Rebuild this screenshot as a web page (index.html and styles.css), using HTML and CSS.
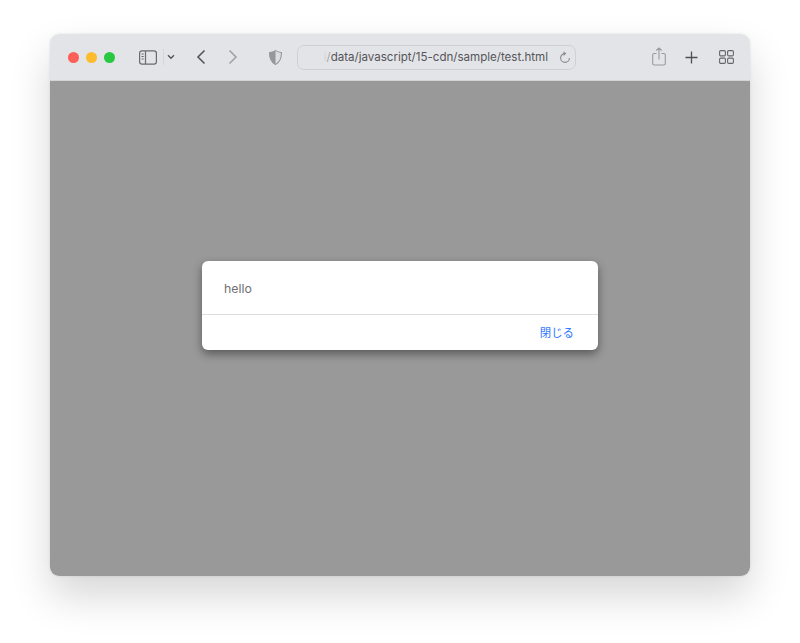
FILE: index.html
```html
<!DOCTYPE html>
<html lang="ja">
<head>
<meta charset="utf-8">
<title>test</title>
<link rel="stylesheet" href="styles.css">
</head>
<body>
<div class="window">
  <header class="toolbar">
    <div class="lights">
      <span class="light red"></span><span class="light yellow"></span><span class="light green"></span>
    </div>
    <svg class="ic sidebar" width="18" height="15" viewBox="0 0 18 15" fill="none" stroke="#6b6b6e" stroke-width="1.2"><rect x=".6" y=".8" width="16.8" height="13.4" rx="2.4"/><path d="M6.5 1v13M2.5 4h2.2M2.5 6.5h2.2M2.5 9h2.2" /></svg>
    <span class="sep"></span>
    <svg class="ic chev" width="8" height="6" viewBox="0 0 8 6" fill="none" stroke="#555" stroke-width="1.4"><path d="M1 1.3l3 3 3-3"/></svg>
    <svg class="ic back" width="10" height="16" viewBox="0 0 10 16" fill="none" stroke="#55555a" stroke-width="1.6"><path d="M8.5 1.5L2 8l6.5 6.5"/></svg>
    <svg class="ic forward" width="10" height="16" viewBox="0 0 10 16" fill="none" stroke="#a2a2a6" stroke-width="1.6"><path d="M1.5 1.5L8 8l-6.5 6.5"/></svg>
    <svg class="ic shield" width="13" height="15" viewBox="0 0 13 15"><path d="M6.5.6C8.300 1.700 10.200 2.300 12.400 2.500 12.600 8.300 10.700 12.400 6.500 14.400 2.300 12.400.4 8.300.6 2.500 2.800 2.300 4.700 1.700 6.500.6z" fill="#dcdde0" stroke="#96979b" stroke-width="1.100"/><path d="M6.500.6C4.700 1.700 2.800 2.300.6 2.500.4 8.300 2.300 12.400 6.500 14.400z" fill="#96979b"/></svg>
    <div class="urlbar">
      <span class="url"><span class="fade-i">i</span><span class="fade-slash">/</span>data/javascript/15-cdn/sample/test.html</span>
      <svg class="ic reload" width="12" height="13" viewBox="0 0 12 13" fill="none" stroke="#8a8a8e" stroke-width="1.100"><path d="M10.400 7A4.400 4.400 0 1 1 6 2.600"/><path d="M4.500.8l2 1.800-2 1.800"/></svg>
    </div>
    <svg class="ic share" width="14" height="19" viewBox="0 0 14 19" fill="none" stroke="#9a9a9e" stroke-width="1.100"><path d="M4.500 6.500H2.200A1.500 1.500 0 0 0 .7 8v8.500A1.500 1.500 0 0 0 2.200 18h9.600a1.500 1.500 0 0 0 1.500-1.500V8a1.500 1.500 0 0 0-1.500-1.500H9.500M7 12.500V1M4.300 3.500L7 .9l2.700 2.600"/></svg>
    <svg class="ic plus" width="13" height="13" viewBox="0 0 13 13" fill="none" stroke="#4e4e52" stroke-width="1.300"><path d="M6.500.5v12M.5 6.500h12"/></svg>
    <svg class="ic grid" width="15" height="14" viewBox="0 0 15 14" fill="none" stroke="#66666a" stroke-width="1.100"><rect x=".6" y=".6" width="5.800" height="5.300" rx="1.200"/><rect x="8.600" y=".6" width="5.800" height="5.300" rx="1.200"/><rect x=".6" y="8.100" width="5.800" height="5.300" rx="1.200"/><rect x="8.600" y="8.100" width="5.800" height="5.300" rx="1.200"/></svg>
  </header>
  <main class="content">
    <div class="dialog">
      <div class="dialog-body">hello</div>
      <div class="dialog-footer"><span class="close">閉じる</span></div>
    </div>
  </main>
</div>
</body>
</html>
```

FILE: styles.css
```css
html, body {
  margin: 0;
  height: 100%;
  background: #fff;
  overflow: hidden;
}
body {
  padding: 34px 50px 67px;
  box-sizing: border-box;
  font-family: "Inter", "Noto Sans CJK JP", sans-serif;
}
.window {
  height: 542px;
  border-radius: 9px;
  overflow: hidden;
  display: flex;
  flex-direction: column;
  box-shadow: 0 20px 40px rgba(0, 0, 0, .16), 0 0 3px rgba(0, 0, 0, .1);
}
.toolbar {
  height: 47px;
  flex: none;
  box-sizing: border-box;
  display: flex;
  align-items: center;
  background: #e3e4e7;
  border-bottom: 1px solid #d3d4d6;
  padding-left: 18px;
}
.ic { flex: none; display: block; }
.lights { display: flex; gap: 7px; }
.light { width: 11px; height: 11px; border-radius: 50%; }
.red { background: #fb5f57; }
.yellow { background: #fdbc2e; }
.green { background: #28c840; }
.sidebar { margin-left: 24px; }
.sep { width: 1px; height: 16px; background: #d6d7da; margin-left: 6px; }
.chev { margin-left: 3px; }
.back { margin-left: 21px; }
.forward { margin-left: 22px; }
.shield { margin-left: 31px; }
.urlbar {
  margin-left: 15px;
  width: 279px;
  height: 25px;
  box-sizing: border-box;
  border: 1px solid #cfd0d3;
  border-radius: 7px;
  background: #e3e4e7;
  display: flex;
  align-items: center;
  justify-content: flex-end;
  padding-right: 4px;
}
.url {
  font-size: 11.550px;
  color: #55555a;
  white-space: nowrap;
}
.fade-i { color: #d2d3d6; }
.fade-slash { color: #a5a6aa; }
.reload { margin-left: 11px; }
.share { margin-left: 76px; margin-bottom: 1px; }
.plus { margin-left: 19px; }
.grid { margin-left: 21px; }
.content {
  flex: 1;
  background: #999;
  display: flex;
  justify-content: center;
  align-items: flex-start;
  padding-top: 180px;
}
.dialog {
  width: 396px;
  height: 89px;
  background: #fff;
  border-radius: 6px;
  box-shadow: 0 4px 10px rgba(0, 0, 0, .42);
  color: #707070;
}
.dialog-body {
  height: 54px;
  box-sizing: border-box;
  border-bottom: 1px solid #dedede;
  padding: 0 22px;
  line-height: 55px;
  font-size: 12.300px;
}
.dialog-footer {
  display: flex;
  justify-content: flex-end;
  padding: 0 24px;
  line-height: 36px;
  font-size: 11.400px;
}
.close { color: #2f78ff; }
```
